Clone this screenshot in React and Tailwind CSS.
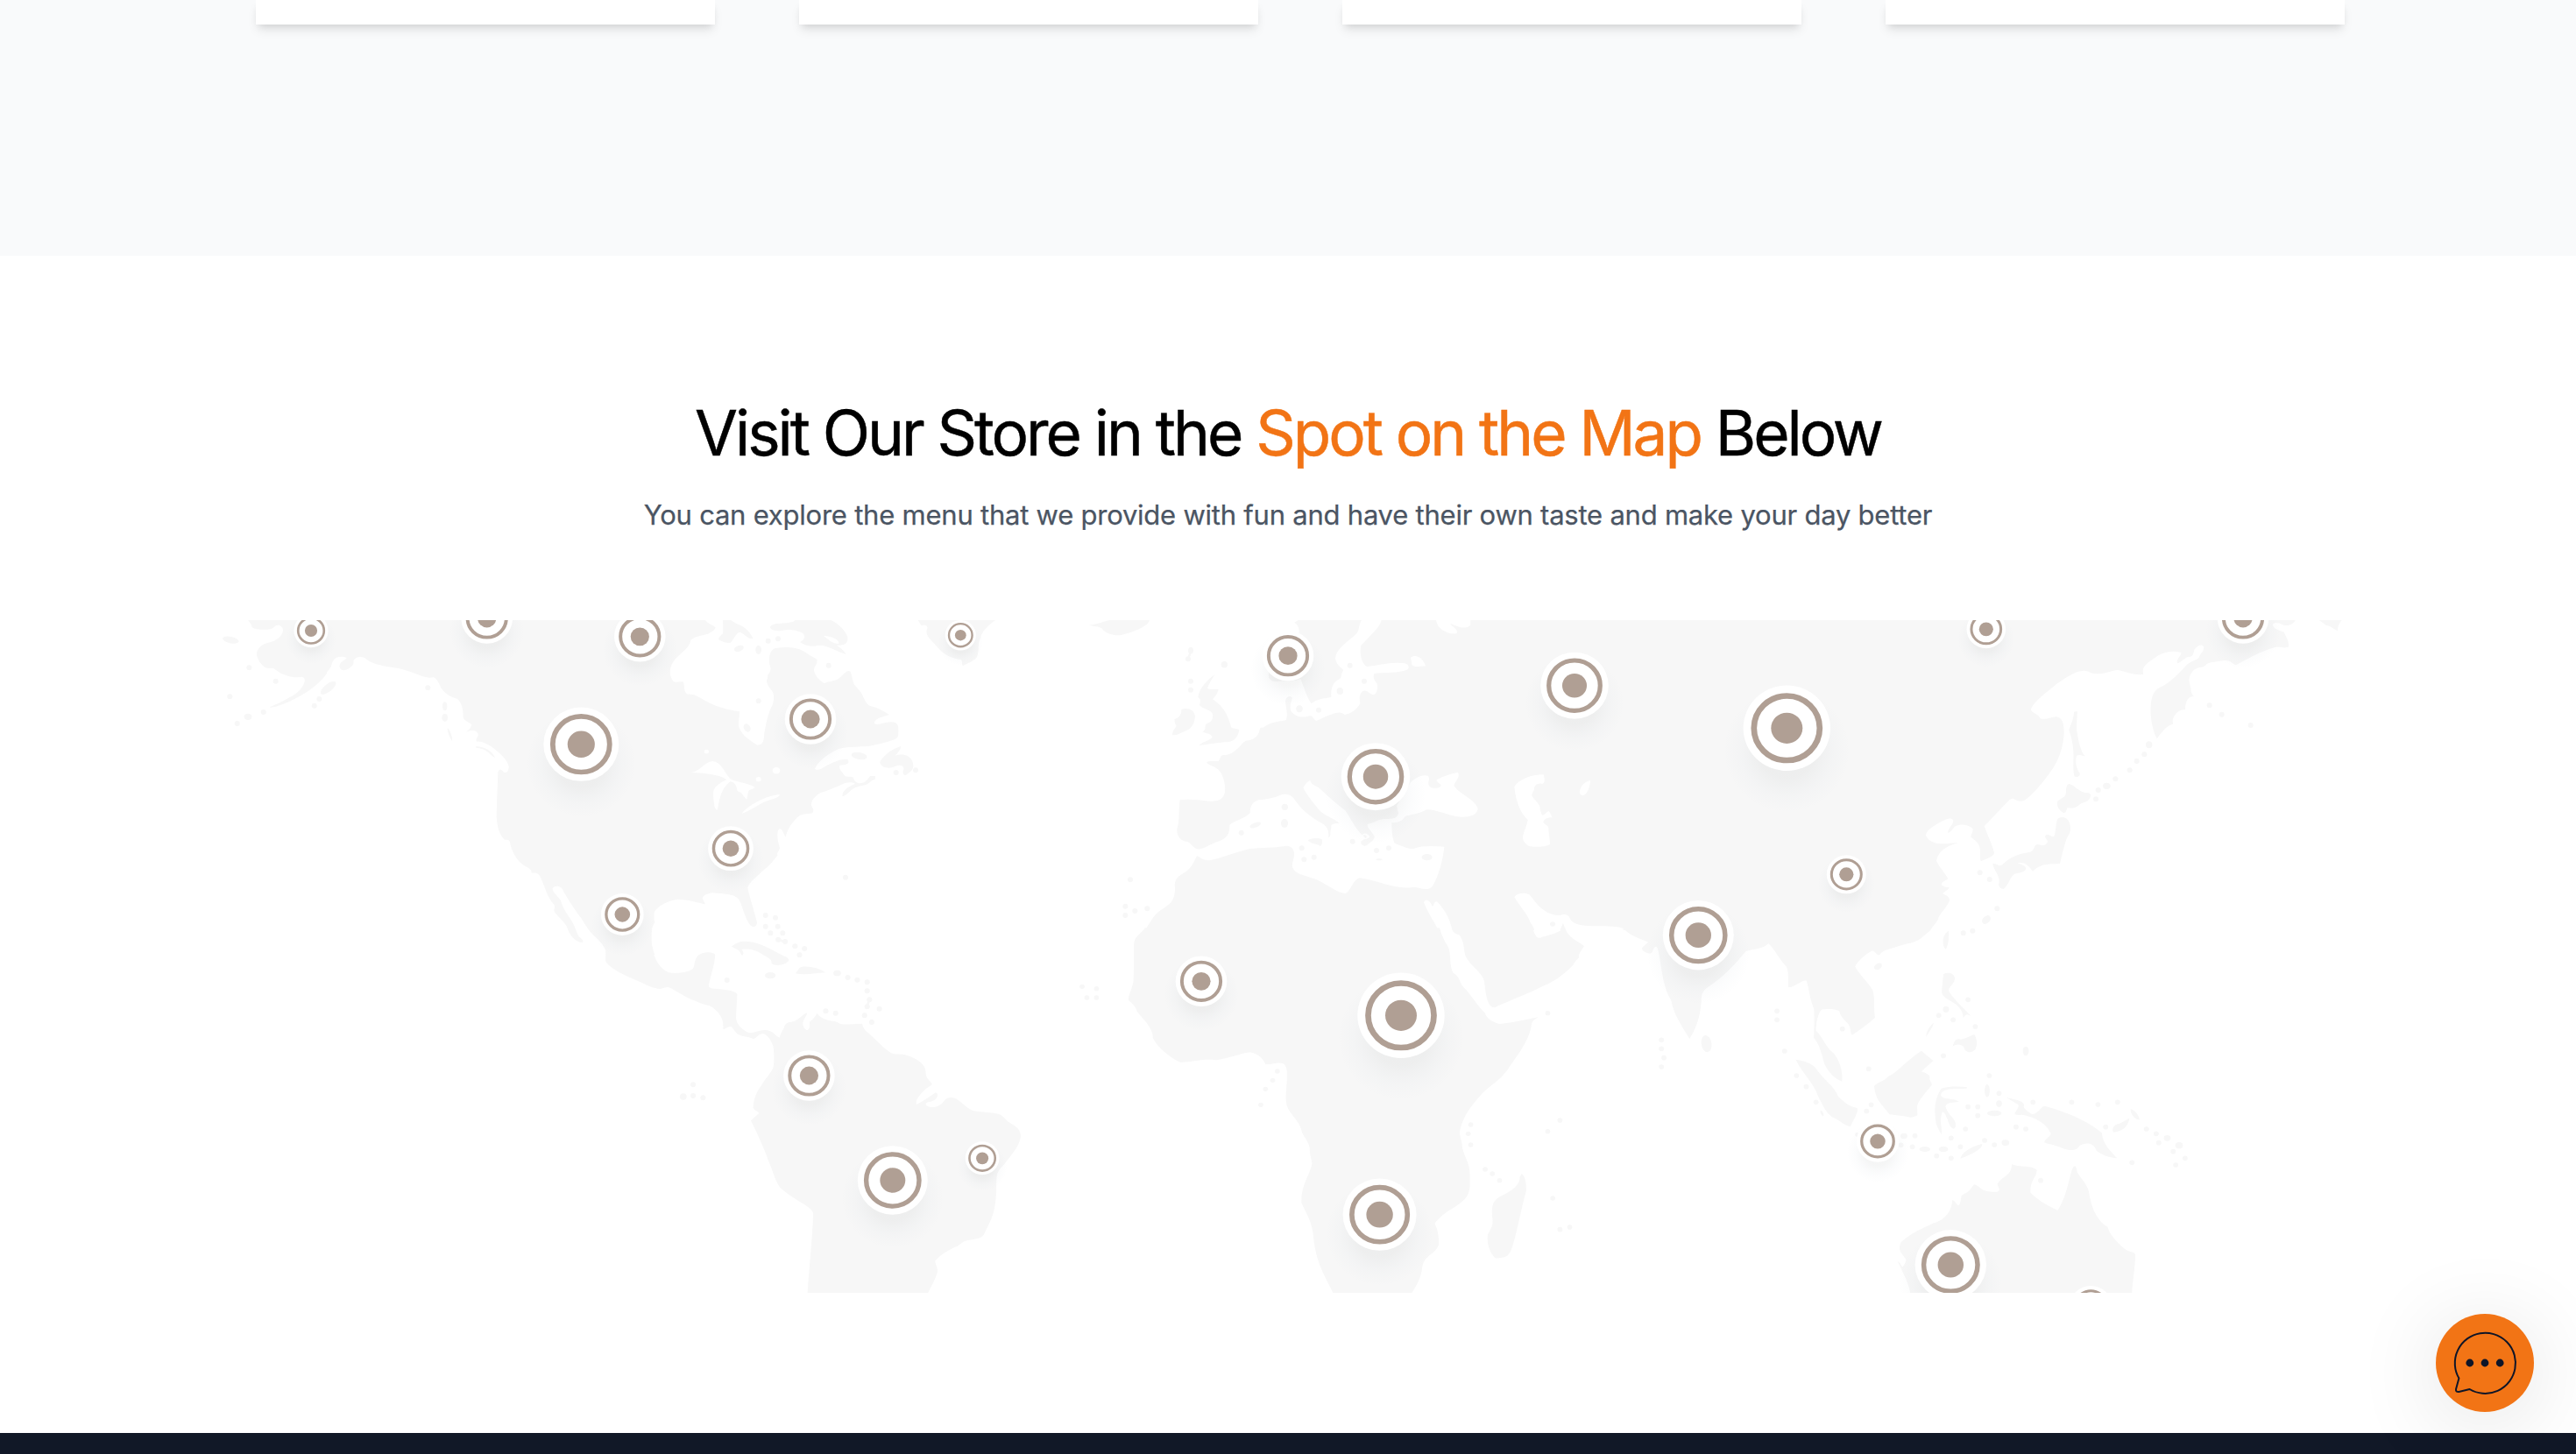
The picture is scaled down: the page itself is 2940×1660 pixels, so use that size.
const LAND = '#f7f7f7';
const WATER = '#ffffff';

const REGIONS = [
  {
    id: 'alaska',
    transform: 'translate(240 690) scale(0.33333 0.33333)',
    rx: 9,
    ry: 9,
    land: [
      'M130,54 L142,72 C138,82 165,88 190,86 C205,86 212,84 222,74 C235,66 250,75 249,90 C246,108 230,122 205,130 C185,132 165,145 159,165 C157,185 175,210 190,217 C205,222 215,214 225,225 C245,240 270,250 300,250 C318,245 327,250 322,268 C312,295 290,310 260,325 C240,338 215,345 203,354 C225,352 260,340 300,318 C335,300 375,272 398,238 C400,225 412,222 415,208 C422,180 440,174 468,183 C455,195 440,200 443,215 C448,230 462,226 472,221 C488,212 493,205 490,193 C500,176 525,178 535,188 C560,207 600,212 640,218 C680,226 710,242 740,250 C755,254 762,247 770,252 C780,264 784,270 790,286 C800,302 820,318 845,323 C862,336 866,360 866,385 C864,395 882,402 895,412 C892,425 885,430 876,437 C895,428 915,430 918,448 C914,458 908,460 912,470 C930,468 948,478 970,493 C995,512 1018,535 1022,555 C1022,570 1015,580 1005,575 C998,565 990,560 985,575 C983,640 980,700 980,730 C983,765 990,790 1008,806 C1016,808 1022,803 1026,815 C1030,840 1048,880 1080,898 C1092,904 1100,908 1100,920 C1110,920 1120,918 1128,930 C1145,960 1150,1000 1178,1030 C1183,1045 1172,1042 1180,1055 C1200,1080 1218,1090 1225,1115 C1235,1140 1255,1158 1275,1158 C1280,1150 1270,1145 1262,1138 C1250,1115 1250,1100 1228,1070 C1210,1045 1205,1030 1200,1015 C1190,998 1170,985 1172,972 C1185,960 1205,965 1210,985 C1225,1010 1250,1050 1270,1075 C1285,1100 1300,1125 1325,1145 C1345,1165 1355,1180 1355,1200 L1500,1200 L1500,54 Z',
      'M812,422 C822,432 830,455 828,468 C820,455 812,440 812,422 Z',
      'M910,486 C940,488 964,500 975,525 C955,515 946,492 910,491 Z',
    ],
    water: [],
    dots: [[70, 122, 28, 11, 12], [133, 217], [224, 263], [67, 316], [373, 324], [356, 347], [182, 369], [129, 385, 13, 11], [92, 408], [745, 286], [404, 286, 32, 13, -38], [803, 349, 8, 15], [803, 388, 10, 13]],
  },
  {
    id: 'america-east',
    transform: 'translate(700 690) scale(0.33333 0.33333)',
    rx: 9,
    ry: 9,
    land: [
      'M0,54 L315,54 C325,68 345,72 350,80 C345,92 330,95 325,101 C305,106 280,108 265,122 C262,150 230,165 210,190 C190,215 190,245 205,263 C215,270 230,262 240,266 C245,285 240,300 255,308 C275,306 290,315 310,328 C350,350 390,362 432,367 C432,385 428,400 429,418 C440,450 470,468 493,482 C515,480 515,465 517,440 C525,400 530,370 545,345 C552,320 550,305 542,295 C530,280 525,270 525,260 C532,250 525,245 532,238 C545,215 535,215 534,200 C532,175 538,155 555,150 C590,145 625,145 650,160 C670,172 680,180 697,188 C700,205 688,210 687,225 C690,245 705,260 722,270 C740,262 755,265 770,255 C790,240 800,222 812,230 C818,245 818,260 825,275 C838,290 850,300 856,318 C865,335 870,345 880,348 C900,352 925,365 945,378 C925,385 900,388 893,405 C900,418 920,405 950,403 C975,403 977,415 976,440 C976,465 960,462 940,470 C910,478 880,487 850,487 C820,490 790,487 765,498 C730,515 700,540 690,563 C700,572 715,562 730,552 C755,540 780,528 803,532 C810,545 800,550 775,551 C770,565 785,575 793,588 C800,592 815,588 822,593 C825,605 832,612 845,613 C870,610 870,595 880,588 L897,588 L896,600 C885,600 880,610 865,618 C845,622 830,625 815,635 C800,650 790,658 784,657 C785,640 795,628 828,614 C810,605 790,612 775,620 C750,630 730,640 710,645 C690,655 675,675 678,690 C685,700 687,705 682,715 C660,720 645,715 630,730 C605,755 595,775 590,797 C582,785 580,770 570,768 C558,775 560,800 570,835 C565,850 560,850 562,860 C545,880 540,890 520,905 C495,930 465,950 460,970 C465,1000 480,1040 492,1090 C492,1105 480,1108 470,1100 C450,1075 445,1040 430,1010 C410,990 380,992 340,988 C318,990 305,1000 305,1008 L315,1027 C290,1022 255,1010 220,1010 C185,1015 150,1035 140,1055 C140,1070 138,1080 142,1090 C130,1105 128,1135 132,1165 C135,1180 138,1190 142,1200 L0,1200 Z',
      'M375,54 C375,70 377,85 375,100 C362,112 358,118 362,122 C375,128 385,132 400,132 C412,122 418,100 432,95 C450,100 460,120 478,117 C470,95 450,75 420,65 C412,60 405,56 402,54 Z',
      'M560,66 C545,68 535,75 537,80 C545,90 560,92 575,90 C610,82 635,92 650,100 C660,115 650,122 640,130 C655,140 670,145 690,143 C720,130 770,165 797,171 C790,155 770,145 765,140 C790,140 805,135 802,112 C795,90 770,65 745,54 L622,54 C620,62 590,65 560,66 Z',
      'M985,486 C960,492 925,515 913,540 C915,560 945,565 965,555 C985,545 1000,555 992,570 C990,585 1000,590 1008,580 C1025,570 1030,560 1025,540 C1018,515 985,510 965,518 C975,508 982,500 985,486 Z',
      'M1043,54 L1308,54 C1280,75 1260,95 1258,115 C1245,135 1255,155 1245,180 C1235,195 1215,200 1197,211 C1192,205 1197,195 1190,189 C1160,185 1130,175 1100,135 C1080,115 1070,105 1073,88 C1080,75 1070,65 1055,73 Z',
    ],
    water: [
      'M720,107 C735,120 750,135 772,135 C775,120 750,110 720,107 Z',
      'M267,576 C300,570 310,540 340,537 C370,540 380,575 400,597 C420,610 460,610 485,627 C475,635 465,632 462,643 L457,668 C440,655 445,645 425,640 C422,620 415,608 400,607 C370,630 365,660 357,703 C345,710 343,670 342,645 C345,620 370,610 388,600 C360,580 300,578 267,576 Z',
      'M440,716 C460,690 520,655 570,651 C568,665 540,665 510,680 C480,697 460,710 440,716 Z',
      'M311,504 a8,7 0 1 0 16,0 a8,7 0 1 0 -16,0 Z',
      'M545,569 a13,11 0 1 0 26,0 a13,11 0 1 0 -26,0 Z',
      'M488,599 a9,8 0 1 0 18,0 a9,8 0 1 0 -18,0 Z',
    ],
    dots: [[530, 125], [564, 118], [430, 151, 17, 10, -20], [497, 156, 10, 15], [737, 209], [497, 331], [458, 423, 11, 15, -30], [842, 519, 27, 12, 10], [968, 576], [1035, 568], [795, 935], [521, 1065], [555, 1073], [521, 1103], [563, 1103], [538, 1126], [580, 1126]],
  },
  {
    id: 'europe',
    transform: 'translate(1240 690) scale(0.33333 0.33333)',
    rx: 9,
    ry: 9,
    land: [
      'M712,62 L725,54 L942,54 C930,75 935,90 925,100 C900,125 855,150 852,185 C855,205 870,215 880,225 C870,240 875,248 868,255 C850,262 835,280 838,318 C815,322 785,325 770,340 C755,320 745,285 733,255 C715,265 690,262 662,263 C645,266 630,265 624,250 C620,200 640,150 690,90 L728,98 C730,85 725,70 712,62 Z',
      'M1010,54 C1005,75 985,95 940,140 C935,170 940,200 960,213 C1000,210 1040,195 1090,202 C1105,207 1105,215 1100,223 C1070,238 1020,232 985,237 C980,250 985,260 995,272 C998,290 995,305 983,310 C965,305 960,290 945,298 C932,310 935,325 937,340 C925,360 905,375 885,378 C875,370 865,368 850,373 C830,378 810,390 787,399 C775,392 775,380 765,382 C740,390 715,385 700,365 C695,350 700,335 705,320 C700,312 685,312 681,330 C682,350 690,370 684,396 C660,402 630,402 605,422 C590,420 595,430 590,440 C580,460 565,465 545,467 C525,480 515,508 475,517 C460,512 460,525 452,537 C435,537 415,535 411,542 C425,555 450,555 462,580 C475,605 478,640 470,655 C460,672 445,675 425,674 C395,672 355,665 320,670 C315,700 320,740 310,770 C308,795 325,812 345,812 C360,820 365,832 378,838 C400,840 425,820 450,812 C480,802 490,790 490,755 C510,740 540,735 560,715 C560,690 570,675 590,670 C620,668 650,660 670,651 C690,648 705,655 715,672 C745,715 780,735 810,752 C830,765 830,785 828,798 C840,795 832,780 838,765 C835,752 850,750 865,749 C850,735 820,725 800,708 C785,690 755,655 742,628 C750,615 758,605 766,603 C770,620 785,620 795,628 C820,650 850,680 885,705 C905,730 915,765 950,795 C960,802 945,808 940,812 C938,825 950,830 960,825 C975,812 990,805 985,792 C975,775 960,765 962,752 C985,750 1000,735 1020,735 C1050,735 1065,735 1068,715 L1062,690 L1110,610 C1125,595 1150,580 1170,588 C1180,600 1160,615 1180,628 C1200,632 1215,628 1214,618 C1205,610 1195,605 1200,600 C1220,590 1245,580 1272,576 C1280,590 1265,605 1258,620 C1275,650 1330,665 1340,700 C1338,722 1310,730 1280,728 C1240,725 1200,702 1165,703 C1130,722 1110,718 1090,727 C1080,745 1065,748 1045,748 C1045,780 1048,805 1055,818 C1075,825 1100,838 1120,837 C1150,825 1190,828 1225,830 C1220,880 1205,930 1185,965 C1165,985 1145,970 1120,968 C1060,980 1000,945 935,937 C910,945 905,985 885,990 C850,985 820,955 780,940 C740,925 715,925 705,900 C702,880 715,870 710,845 C705,830 690,826 680,828 C640,835 600,832 560,837 C520,845 460,870 420,877 C395,877 385,862 378,862 C370,875 365,895 345,912 C325,928 305,930 302,960 C305,990 300,1010 285,1025 C260,1045 245,1050 230,1070 C218,1088 208,1103 200,1116 L1500,1116 L1500,54 Z',
      'M440,240 C410,262 385,290 382,318 C395,325 388,335 387,345 C400,360 425,360 432,375 C435,395 425,405 412,408 C400,418 415,425 397,437 C415,442 430,445 431,455 C420,468 395,470 386,483 C420,480 450,472 485,472 C510,468 520,450 523,430 C515,423 500,428 495,420 C485,380 470,350 432,325 C445,310 450,300 452,290 C435,292 420,292 414,287 C420,270 430,255 440,240 Z',
      'M325,360 C345,352 370,360 372,385 C368,420 350,432 330,437 C315,445 305,450 294,447 C295,430 305,425 308,415 C300,405 303,400 301,393 C315,390 325,380 325,360 Z',
      'M8,71 C40,68 60,58 80,54 L216,54 C212,75 160,95 120,105 C90,108 65,100 52,82 C45,75 25,75 8,71 Z',
      'M758,808 C775,798 800,800 806,805 C808,815 806,828 800,828 C785,818 770,822 758,808 Z',
    ],
    water: [
      'M1155,1020 C1165,1005 1175,1015 1185,1035 C1190,1030 1190,1015 1200,1018 C1232,1050 1246,1085 1253,1118 L1206,1118 C1190,1085 1165,1050 1155,1020 Z',
      'M1197,54 L1315,54 L1315,70 C1300,90 1270,75 1245,65 C1255,80 1275,85 1267,100 C1240,105 1200,85 1197,54 Z',
      'M1110,182 C1125,170 1150,178 1162,212 C1145,210 1125,218 1115,208 Z',
      'M942,796 C945,780 962,782 970,796 C962,806 950,806 950,800 C958,802 962,798 958,792 C952,788 946,790 942,796 Z',
    ],
    dots: [[357, 158, 9, 11], [348, 187], [353, 173, 4, 14, 20], [472, 206, 11, 11], [357, 263], [357, 293], [902, 209], [951, 263], [868, 297, 11, 12], [729, 358, 11, 12], [795, 362], [679, 694, 11, 11], [678, 750, 12, 15], [530, 782], [578, 756, 20, 8, -20], [911, 812], [993, 843], [1035, 835], [737, 835], [745, 874], [779, 866], [1166, 866, 18, 11], [1002, 874, 11, 3], [150, 943], [133, 1034], [166, 1050], [208, 1042], [133, 1065]],
  },
  {
    id: 'asia',
    transform: 'translate(1700 690) scale(0.33333 0.33333)',
    rx: 9,
    ry: 8,
    land: ['M0,54 L1490,54 L1490,1116 L0,1116 Z'],
    water: [
      'M85,625 C100,600 140,583 185,583 C190,600 190,612 180,615 C165,610 150,622 153,635 C143,650 143,655 150,663 C165,680 175,690 173,702 C178,715 178,722 182,722 C195,718 198,705 205,710 L215,730 C200,730 185,735 184,747 C190,755 200,757 202,765 C202,790 207,800 207,822 C190,832 150,832 135,828 C120,818 113,810 114,795 C120,770 130,750 131,738 C110,720 90,680 85,625 Z',
      'M345,603 C345,625 335,650 320,655 C308,652 308,645 310,635 C315,618 330,605 345,603 Z',
      'M85,1002 C95,988 120,985 138,995 C160,1025 190,1065 240,1065 C255,1060 270,1060 275,1075 C285,1100 320,1100 350,1102 C390,1103 430,1100 458,1110 L458,1118 L262,1118 L252,1092 L240,1118 L154,1118 C152,1108 148,1100 140,1090 C130,1060 100,1030 85,1002 Z',
    ],
    dots: [[216, 1095]],
  },
  {
    id: 'far-east',
    transform: 'translate(2180 690) scale(0.33333 0.33333)',
    rx: 9,
    ry: 9,
    land: [
      'M0,54 L1319,54 C1310,72 1290,75 1275,70 C1262,62 1248,60 1242,68 C1242,85 1265,88 1280,95 C1290,115 1298,130 1296,145 C1285,152 1270,145 1250,147 C1200,160 1150,190 1115,208 C1100,200 1095,190 1075,192 C1050,198 1030,195 1015,205 C1005,220 990,213 975,222 C955,240 952,260 958,275 C965,295 957,300 972,315 C955,315 943,325 942,360 C930,362 922,360 910,375 C895,395 900,400 900,410 C880,412 860,440 845,460 C830,430 822,390 824,350 C825,310 840,290 860,282 C890,270 920,235 950,205 C965,193 985,190 990,180 C995,165 1008,160 1005,145 C1000,135 985,140 973,155 C970,175 965,180 950,180 C935,188 925,200 915,202 C910,188 930,175 928,165 C900,158 875,162 850,175 C830,190 800,205 797,225 L798,240 C760,243 735,228 710,225 C690,225 680,237 640,238 C615,238 610,225 590,228 C560,230 530,255 505,270 C470,300 425,330 413,360 C420,375 440,375 445,390 C465,398 485,385 500,385 C520,387 527,405 527,440 C525,480 515,520 490,560 C460,605 425,645 400,665 C385,678 370,675 355,666 C345,664 340,670 330,680 L254,760 C265,790 280,820 288,850 C288,862 270,868 243,880 C238,875 241,865 240,850 C242,820 225,810 208,797 C208,785 218,780 214,768 C200,755 175,750 155,760 C145,768 140,782 129,783 C130,765 148,755 148,740 C140,728 125,735 100,748 C75,762 55,775 54,792 C65,815 90,820 115,820 C130,820 150,815 165,817 C130,825 95,845 90,878 C100,900 120,920 130,940 C122,948 108,948 108,960 C112,968 125,968 134,970 C128,980 115,985 112,990 C125,998 135,1000 135,1015 C125,1040 100,1060 95,1080 C75,1115 35,1150 0,1160 Z',
      'M561,368 L572,366 C573,380 568,420 572,440 C578,475 585,505 599,520 C590,520 585,513 570,518 C565,540 568,560 582,580 C580,592 570,593 562,588 C556,560 562,520 558,490 C555,465 550,450 544,430 C550,410 560,395 561,368 Z',
      'M545,615 C565,620 580,645 605,645 C620,645 620,655 615,665 C605,680 590,675 575,690 C565,700 550,697 538,697 C535,705 535,715 525,714 C510,705 500,690 505,675 C515,662 535,665 534,640 C535,625 535,618 545,615 Z',
      'M505,735 C520,722 548,730 549,765 C550,785 540,790 535,805 C525,835 520,860 513,888 C480,890 450,885 420,914 C405,895 395,880 368,886 C380,892 400,895 396,908 C385,922 365,918 355,925 C340,940 335,965 320,975 C308,975 302,965 304,955 C310,930 285,910 283,888 C300,888 305,900 315,892 C350,860 375,855 405,850 C430,845 420,825 437,822 C450,825 460,830 470,815 C475,805 455,800 465,790 C480,785 488,805 495,790 C500,765 500,745 505,735 Z',
      'M1400,54 L1478,54 C1470,65 1462,75 1465,91 C1450,85 1440,72 1425,72 Z',
      'M132,1118 C134,1140 130,1170 122,1181 C108,1170 108,1130 132,1118 Z',
    ],
    water: [],
    dots: [[818, 481, 11, 12], [802, 514], [776, 537], [752, 568], [703, 598], [673, 622, 13, 11], [644, 636], [636, 667], [1025, 346], [1067, 377], [1166, 414], [239, 919], [272, 942], [298, 1042], [261, 1080, 17, 12, -45], [214, 1118], [182, 1126]],
  },
  {
    id: 'america-south',
    transform: 'translate(540 1060) scale(0.43367 0.33333)',
    rx: 7,
    ry: 9,
    land: [
      'M304,0 C325,30 345,55 349,75 C350,92 346,105 350,116 C370,145 400,160 430,178 C455,193 475,207 493,207 C503,204 505,200 514,201 C535,212 555,235 585,248 C605,262 625,262 632,272 C650,292 660,310 658,345 C668,343 672,332 680,337 C690,352 690,360 705,367 C720,373 730,372 737,379 C748,374 750,362 762,360 C775,362 785,385 790,405 C792,430 793,450 790,475 C785,495 770,512 760,535 C745,560 738,585 737,615 C742,625 750,625 752,633 L731,658 C745,695 765,750 780,805 C790,835 795,865 808,888 C825,908 850,928 875,948 C885,958 893,965 895,975 C893,1060 885,1150 880,1248 L1197,1248 C1205,1225 1218,1200 1222,1175 C1222,1155 1215,1148 1216,1138 C1228,1120 1250,1100 1275,1088 C1285,1078 1290,1070 1305,1067 C1325,1063 1342,1060 1346,1043 C1358,1010 1368,990 1373,950 C1378,920 1376,885 1378,850 C1380,825 1395,815 1402,800 C1420,770 1440,740 1441,710 C1440,685 1428,678 1412,665 C1400,655 1395,640 1382,635 C1365,630 1340,630 1315,624 C1295,612 1285,592 1268,581 C1255,577 1245,580 1240,590 C1230,605 1222,613 1205,612 C1190,607 1190,603 1193,597 C1205,592 1215,592 1220,580 C1225,570 1222,560 1215,563 C1203,575 1185,590 1167,603 C1163,590 1172,575 1183,560 C1192,545 1205,540 1208,533 C1203,520 1190,515 1191,490 C1190,465 1170,445 1135,432 C1120,430 1112,433 1100,427 C1080,412 1060,380 1040,358 C1030,348 1025,338 1024,326 C1000,326 985,330 970,328 C960,325 960,320 950,318 C930,315 912,305 905,290 C900,305 893,312 885,320 C888,335 884,350 877,348 C868,340 865,325 870,315 C872,305 878,300 879,289 C865,295 855,318 838,320 C825,320 820,330 818,340 C812,355 808,365 806,374 C795,368 790,350 770,348 C755,347 735,360 725,357 C705,345 692,325 692,305 C692,275 695,250 695,225 C690,212 665,210 640,207 C620,206 618,200 621,188 C625,160 635,130 637,90 C630,78 605,80 592,92 C580,110 585,125 578,138 C565,152 535,155 515,151 C490,138 470,95 469,40 L470,0 Z',
      'M680,62 C695,45 710,42 730,46 C770,55 790,80 825,98 C833,105 832,112 822,120 C808,127 795,128 785,120 C788,105 775,100 760,88 C745,72 720,68 707,72 C712,82 713,88 708,92 C702,88 705,78 695,72 Z',
      'M848,154 C855,145 858,132 865,131 C890,128 915,138 927,151 C900,152 880,162 848,154 Z',
      'M1040,244 L1046,246 L1040,266 L1034,264 Z',
      'M800,34 L824,42 L822,50 L800,42 Z',
    ],
    water: [],
    dots: [[803, 38], [821, 45], [847, 61], [872, 69], [859, 91], [668, 177], [782, 161, 14, 11], [958, 153, 10, 10], [986, 168], [1011, 176], [1037, 184], [1037, 214], [1043, 244], [1037, 268], [1069, 275], [1030, 298], [1049, 321], [928, 283], [954, 290], [579, 535], [579, 573], [553, 576, 9, 11], [605, 580]],
  },
  {
    id: 'africa',
    transform: 'translate(1220 1060) scale(0.35714 0.33333)',
    rx: 8,
    ry: 8,
    land: [
      'M243,-2 C235,15 210,25 208,50 C206,100 208,140 206,180 C200,215 190,225 190,245 C205,260 212,265 218,285 C235,310 270,340 268,375 C285,410 320,440 355,458 C390,460 420,445 470,451 C515,445 555,425 580,424 C605,430 620,445 628,465 C650,468 665,455 685,463 C700,475 697,500 696,530 C690,600 695,605 702,620 C715,645 740,665 745,700 C755,720 765,730 769,750 C770,780 775,790 777,805 C772,840 740,880 743,940 C755,970 775,1000 780,1045 C788,1140 810,1175 844,1248 L1096,1248 C1105,1230 1125,1205 1130,1155 C1140,1115 1175,1115 1182,1080 C1182,1040 1175,1025 1169,1010 C1200,965 1245,955 1270,920 C1285,895 1281,870 1281,840 C1280,800 1262,780 1257,750 C1257,725 1245,710 1250,690 C1260,640 1290,600 1325,560 C1355,530 1385,515 1410,470 C1445,420 1475,370 1479,325 C1482,315 1490,310 1500,304 C1460,312 1410,325 1375,327 C1350,318 1335,308 1330,290 C1305,265 1285,225 1260,200 C1245,180 1250,165 1228,153 C1215,125 1222,95 1213,65 C1200,45 1190,20 1184,-2 Z',
      'M1225,-2 C1225,25 1250,15 1252,30 C1265,50 1260,80 1270,100 C1285,130 1320,150 1327,180 C1332,220 1335,270 1360,271 C1420,240 1460,228 1515,197 L1515,30 C1508,32 1500,33 1495,30 C1485,15 1485,5 1480,-2 Z',
      'M1447,840 C1460,850 1462,880 1461,900 C1450,940 1435,1020 1425,1060 C1415,1100 1410,1115 1398,1123 C1385,1128 1372,1131 1362,1129 C1345,1110 1335,1080 1338,1050 C1345,1035 1355,1020 1354,1000 C1350,960 1350,935 1375,920 C1400,905 1440,890 1441,850 Z',
    ],
    water: [],
    dots: [[42, 199], [88, 206], [57, 237], [88, 237], [666, 489], [651, 520], [628, 550], [613, 604], [1284, 672], [1276, 703], [1284, 741], [1330, 825], [1353, 840], [1376, 863], [1530, 290], [1530, 695], [1546, 924]],
  },
  {
    id: 'oceania',
    transform: 'translate(1760 1060) scale(0.48469 0.33333)',
    rx: 6,
    ry: 8.5,
    land: [
      'M-2,30 C20,22 45,12 50,-2 L54,-2 C60,30 85,45 99,60 C92,80 85,85 87,100 C75,115 75,125 70,130 C50,160 20,190 -2,199 Z',
      'M190,-2 C205,25 230,35 250,47 C240,60 232,65 237,75 C245,85 255,90 260,80 C262,68 268,55 272,68 C280,110 280,150 290,200 C295,230 305,240 306,260 C315,310 335,345 347,378 C360,350 372,310 375,250 C375,225 378,215 388,203 C430,165 455,120 480,78 C500,70 520,70 533,52 C550,75 555,100 575,130 C582,150 578,175 580,202 C600,200 605,180 622,178 C628,200 630,240 640,275 C642,320 640,345 640,375 C655,400 660,440 665,465 C675,495 690,515 706,524 C710,480 695,440 685,425 C670,410 660,370 645,350 C645,320 650,290 658,278 C670,275 690,275 700,283 C702,305 715,315 722,330 C728,345 725,355 730,365 C750,345 770,325 784,305 C780,280 785,240 778,210 C765,180 745,155 737,130 C745,110 760,90 778,76 C785,80 790,95 795,90 C805,70 825,70 840,60 C860,50 880,50 895,30 C905,18 915,8 918,-2 Z',
      'M597,449 C625,455 640,465 650,490 C665,520 690,545 697,575 C715,600 725,610 742,615 C745,630 735,650 726,678 C710,675 700,655 682,645 C665,625 660,600 650,575 C640,530 615,500 597,449 Z',
      'M893,419 L921,453 L893,490 C910,498 915,505 912,515 L918,535 C905,560 885,590 883,610 L884,640 C875,645 870,650 862,646 C845,640 830,640 818,637 C800,600 785,590 782,540 C790,525 805,525 815,507 C835,495 860,450 893,419 Z',
      'M1000,543 C980,540 955,540 940,548 C925,580 922,620 928,670 C932,685 938,700 941,706 C942,680 935,660 942,630 C948,625 950,640 955,655 C960,685 972,695 974,675 C975,650 955,640 950,610 C952,595 965,597 982,593 C970,580 945,588 939,572 C940,545 970,550 1000,548 Z',
      'M945,156 C955,150 968,150 972,170 C972,190 955,200 958,215 C965,235 990,270 1010,300 C1000,292 998,292 992,306 C990,290 990,280 975,260 C960,245 940,235 941,215 Z',
      'M922,323 C920,340 908,360 905,371 C903,355 912,335 922,323 Z',
      'M967,404 C970,385 975,375 985,380 C1000,378 1010,365 1018,364 C1025,380 1025,400 1020,415 C1010,430 995,425 993,405 C985,395 975,395 967,404 Z',
      'M1093,579 C1110,585 1135,590 1135,605 C1130,615 1145,630 1155,637 C1170,630 1175,610 1183,608 C1240,630 1290,665 1318,700 C1320,740 1340,765 1354,787 C1335,785 1315,775 1305,760 C1300,735 1280,730 1265,745 C1258,765 1240,760 1225,752 C1205,740 1190,738 1182,733 C1185,720 1198,712 1198,703 C1190,670 1160,645 1130,638 C1120,640 1112,640 1113,632 C1120,615 1125,610 1120,602 Z',
      'M985,788 C988,765 1015,745 1036,738 C1038,755 1010,775 985,788 Z',
      'M1383,650 C1380,680 1365,695 1345,698 C1340,680 1350,670 1360,668 Z',
      'M1386,618 C1398,625 1405,640 1407,655 C1396,655 1386,640 1386,618 Z',
      'M1106,808 C1130,820 1150,810 1165,827 C1165,850 1148,865 1150,905 C1175,940 1195,950 1214,966 C1235,920 1240,860 1248,825 C1255,805 1258,815 1260,835 C1275,870 1287,880 1289,915 C1295,965 1310,1005 1332,1023 C1335,1045 1350,1070 1370,1095 C1380,1110 1397,1105 1397,1120 C1396,1170 1390,1210 1389,1248 L867,1248 C862,1210 850,1180 837,1140 C845,1145 845,1160 850,1158 C858,1140 858,1135 855,1130 C842,1105 838,1100 845,1075 C870,1040 900,1025 920,1010 C950,1000 965,965 966,930 C975,935 975,950 982,948 C990,925 982,915 995,908 C1010,900 1010,885 1018,877 C1035,885 1030,900 1060,902 C1085,905 1075,890 1072,875 C1085,845 1105,850 1106,808 Z',
    ],
    water: [],
    dots: [[42, 657], [42, 1031], [65, 1023], [281, 382], [281, 412], [287, 443], [281, 474], [553, 283], [553, 313], [571, 420], [599, 504], [622, 542], [645, 595], [707, 344], [769, 481], [764, 626], [775, 604], [791, 130, 8, 12, 30], [387, 395, 12, 29, -5], [659, 633, 3, 10, -15], [1003, 244], [951, 277, 7, 11], [934, 298], [968, 313], [1020, 336], [945, 436], [1139, 420, 7, 16], [1053, 504], [1048, 556, 6, 22], [1076, 565], [1076, 600, 7, 11], [1003, 611], [1026, 611], [1026, 641], [1065, 633, 17, 10], [997, 687], [1116, 680], [1139, 687], [963, 718], [852, 711, 8, 10], [878, 710], [872, 748], [845, 742], [901, 756, 13, 9], [945, 756, 11, 10], [985, 748], [929, 779], [963, 787], [1042, 726], [1065, 741], [1091, 734, 9, 10], [1156, 595], [1247, 595], [1309, 603], [1355, 595], [1327, 680], [1423, 687], [1446, 703], [1472, 718, 8, 10], [1452, 734], [1500, 743, 9, 11], [1486, 764], [1514, 787], [1492, 810], [1389, 802], [1174, 863], [741, 706, 4, 8]],
  },
];

// [x, y, radius]
const PINS = [
  [355, 720, 19.6],
  [555.7, 706, 29.3],
  [730.3, 726.8, 29.3],
  [663.3, 849.7, 43],
  [710.3, 1044, 24.4],
  [925, 821, 29.3],
  [834, 968.7, 25.9],
  [1096.3, 725.2, 17.6],
  [1470, 748.7, 29.3],
  [1570, 886.7, 39.3],
  [1797, 782.7, 38.8],
  [2039.3, 831.3, 49.7],
  [2107.3, 998.3, 22.5],
  [1938.3, 1067.7, 40.5],
  [2266.8, 718.3, 22.3],
  [2560, 706, 29.3],
  [923.4, 1228, 29.3],
  [1018.8, 1347.5, 40],
  [1121.1, 1322.3, 19.4],
  [1371, 1120.3, 29.3],
  [1599, 1159.3, 49.7],
  [1574.6, 1386.7, 42],
  [2143, 1303, 24.2],
  [2226.3, 1444, 40.7],
  [2386.3, 1491.5, 24],
];

function Pin({ x, y, r }) {
  return (
    <g transform={`translate(${x} ${y}) scale(${r} ${r * 0.98})`}>
      <circle cx="0" cy="0.52" r="1.46" fill="url(#pin-shadow)" />
      <circle r="1" fill="#ffffff" />
      <circle r="0.755" fill="none" stroke="#b09f94" strokeWidth="0.135" />
      <circle r="0.362" fill="#b09f94" />
    </g>
  );
}

function WorldMap() {
  return (
    <svg
      className="block h-[768px] w-[2460px]"
      viewBox="240 708 2460 768"
      role="img"
      aria-label="Store locations"
    >
      <defs>
        <radialGradient id="pin-shadow">
          <stop offset="0" stopColor="#2c3838" stopOpacity="0.055" />
          <stop offset="0.45" stopColor="#2c3838" stopOpacity="0.045" />
          <stop offset="0.75" stopColor="#4a6a88" stopOpacity="0.018" />
          <stop offset="1" stopColor="#4a6a88" stopOpacity="0" />
        </radialGradient>
      </defs>
      {REGIONS.map((region) => (
        <g key={region.id} transform={region.transform}>
          {region.land.map((d) => (
            <path key={d} d={d} fill={LAND} />
          ))}
          {region.water.map((d) => (
            <path key={d} d={d} fill={WATER} />
          ))}
          {region.dots.map(([x, y, rx = region.rx, ry = region.ry, angle = 0]) => (
            <ellipse
              key={`${x}-${y}`}
              rx={rx}
              ry={ry}
              fill={LAND}
              transform={`translate(${x} ${y}) rotate(${angle})`}
            />
          ))}
        </g>
      ))}
      {PINS.map(([x, y, r]) => (
        <Pin key={`${x}-${y}`} x={x} y={y} r={r} />
      ))}
    </svg>
  );
}

function ChatButton() {
  return (
    <button
      type="button"
      aria-label="Open chat"
      className="fixed right-12 bottom-12 flex size-28 items-center justify-center rounded-full bg-[#f27415] shadow-[0_12px_100px_rgba(0,0,0,0.12)]"
    >
      <svg className="size-28" viewBox="0 0 112 112" fill="none">
        <path
          d="M26.4 73.6 A34.6 34.6 0 1 1 38.6 86 L26.4 89 Q22.6 89.6 23 86 Z"
          stroke="#0e1528"
          strokeWidth="2"
          strokeLinejoin="round"
        />
        <circle cx="38.8" cy="56" r="4.4" fill="#0e1528" />
        <circle cx="56" cy="56" r="4.4" fill="#0e1528" />
        <circle cx="73.2" cy="56" r="4.4" fill="#0e1528" />
      </svg>
    </button>
  );
}

export default function App() {
  return (
    <div className="flex h-[1660px] w-[2940px] flex-col overflow-hidden bg-white font-['Inter',sans-serif]">
      <section className="h-[292px] shrink-0 bg-[#f9fafb] pl-[292px]">
        <div className="flex gap-24">
          {[0, 1, 2, 3].map((card) => (
            <div
              key={card}
              className="h-7 w-[524px] bg-white shadow-[0_8px_12px_-2px_rgba(0,0,0,0.1),0_4px_8px_-4px_rgba(0,0,0,0.1)]"
            />
          ))}
        </div>
      </section>

      <section className="flex h-[1344px] shrink-0 flex-col items-center bg-white pt-[159px]">
        <h2 className="text-[71px] leading-[86px] font-normal tracking-[-3.05px] whitespace-nowrap text-black [-webkit-text-stroke:0.5px_currentColor]">
          Visit Our Store in the <span className="text-[#f27415]">Spot on the Map</span> Below
        </h2>
        <p className="mt-[31px] text-[31px] leading-10 tracking-[-0.23px] whitespace-nowrap text-[#4b5563] [-webkit-text-stroke:0.25px_currentColor]">
          You can explore the menu that we provide with fun and have their own taste and make your day better
        </p>
        <div className="mt-[100px] overflow-hidden">
          <WorldMap />
        </div>
      </section>

      <footer className="h-6 shrink-0 bg-[#111827]" />
      <ChatButton />
    </div>
  );
}
